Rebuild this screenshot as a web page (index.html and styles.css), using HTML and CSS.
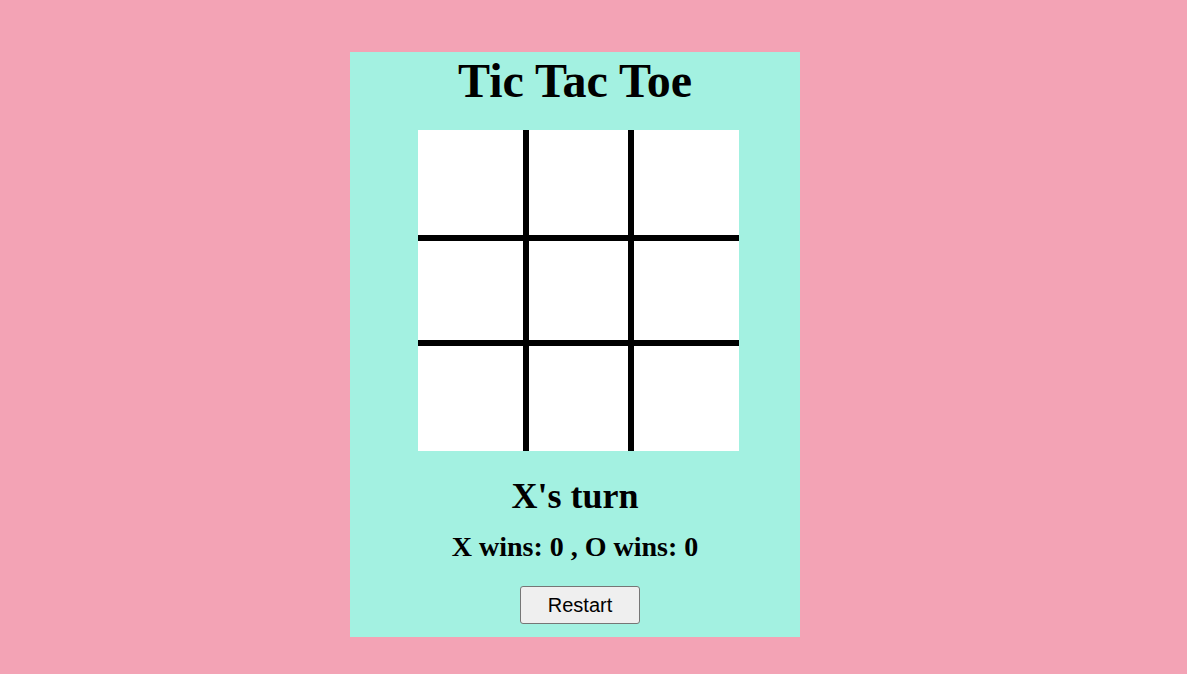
FILE: index.html
```html
<!DOCTYPE html>
<html lang="en">
<head>
<meta charset="utf-8">
<title>Tic Tac Toe</title>
<link rel="stylesheet" href="styles.css">
</head>
<body>
  <main class="game">
    <h1 class="title">Tic Tac Toe</h1>
    <div class="board">
      <div class="cell"></div>
      <div class="cell"></div>
      <div class="cell"></div>
      <div class="cell"></div>
      <div class="cell"></div>
      <div class="cell"></div>
      <div class="cell"></div>
      <div class="cell"></div>
      <div class="cell"></div>
    </div>
    <h2 class="status">X's turn</h2>
    <h3 class="score">X wins: 0 , O wins: 0</h3>
    <button class="restart" type="button">Restart</button>
  </main>
</body>
</html>
```
FILE: styles.css
```css
html, body {
  margin: 0;
  padding: 0;
}

body {
  background: #f3a3b5;
  font-family: "Liberation Serif", "Times New Roman", serif;
  color: #000;
  padding-top: 52px;
  padding-left: 350px;
  height: 674px;
  box-sizing: border-box;
}

.game {
  width: 450px;
  background: #a3f1e1;
  display: flex;
  flex-direction: column;
  align-items: center;
  padding: 2px 0 13px;
  box-sizing: border-box;
}

.title {
  margin: 0;
  font-size: 48px;
  line-height: 53px;
  font-weight: bold;
}

.board {
  margin: 23px 0 0 7px;
  display: grid;
  grid-template-columns: 105px 99px 105px;
  grid-template-rows: 105px 99px 105px;
  gap: 6px;
  background: #000;
}

.cell {
  background: #fff;
}

.status {
  margin: 25px 0 0;
  font-size: 36px;
  line-height: 40px;
  font-weight: bold;
}

.score {
  margin: 15px 0 0;
  font-size: 28px;
  line-height: 32px;
  font-weight: bold;
}

.restart {
  margin: 23px 0 0 10px;
  width: 120px;
  height: 38px;
  font-family: "Liberation Sans", Arial, sans-serif;
  font-size: 20px;
  color: #000;
  background: #efefef;
  border: 1px solid #767676;
  border-radius: 3px;
  padding: 0;
}
```
